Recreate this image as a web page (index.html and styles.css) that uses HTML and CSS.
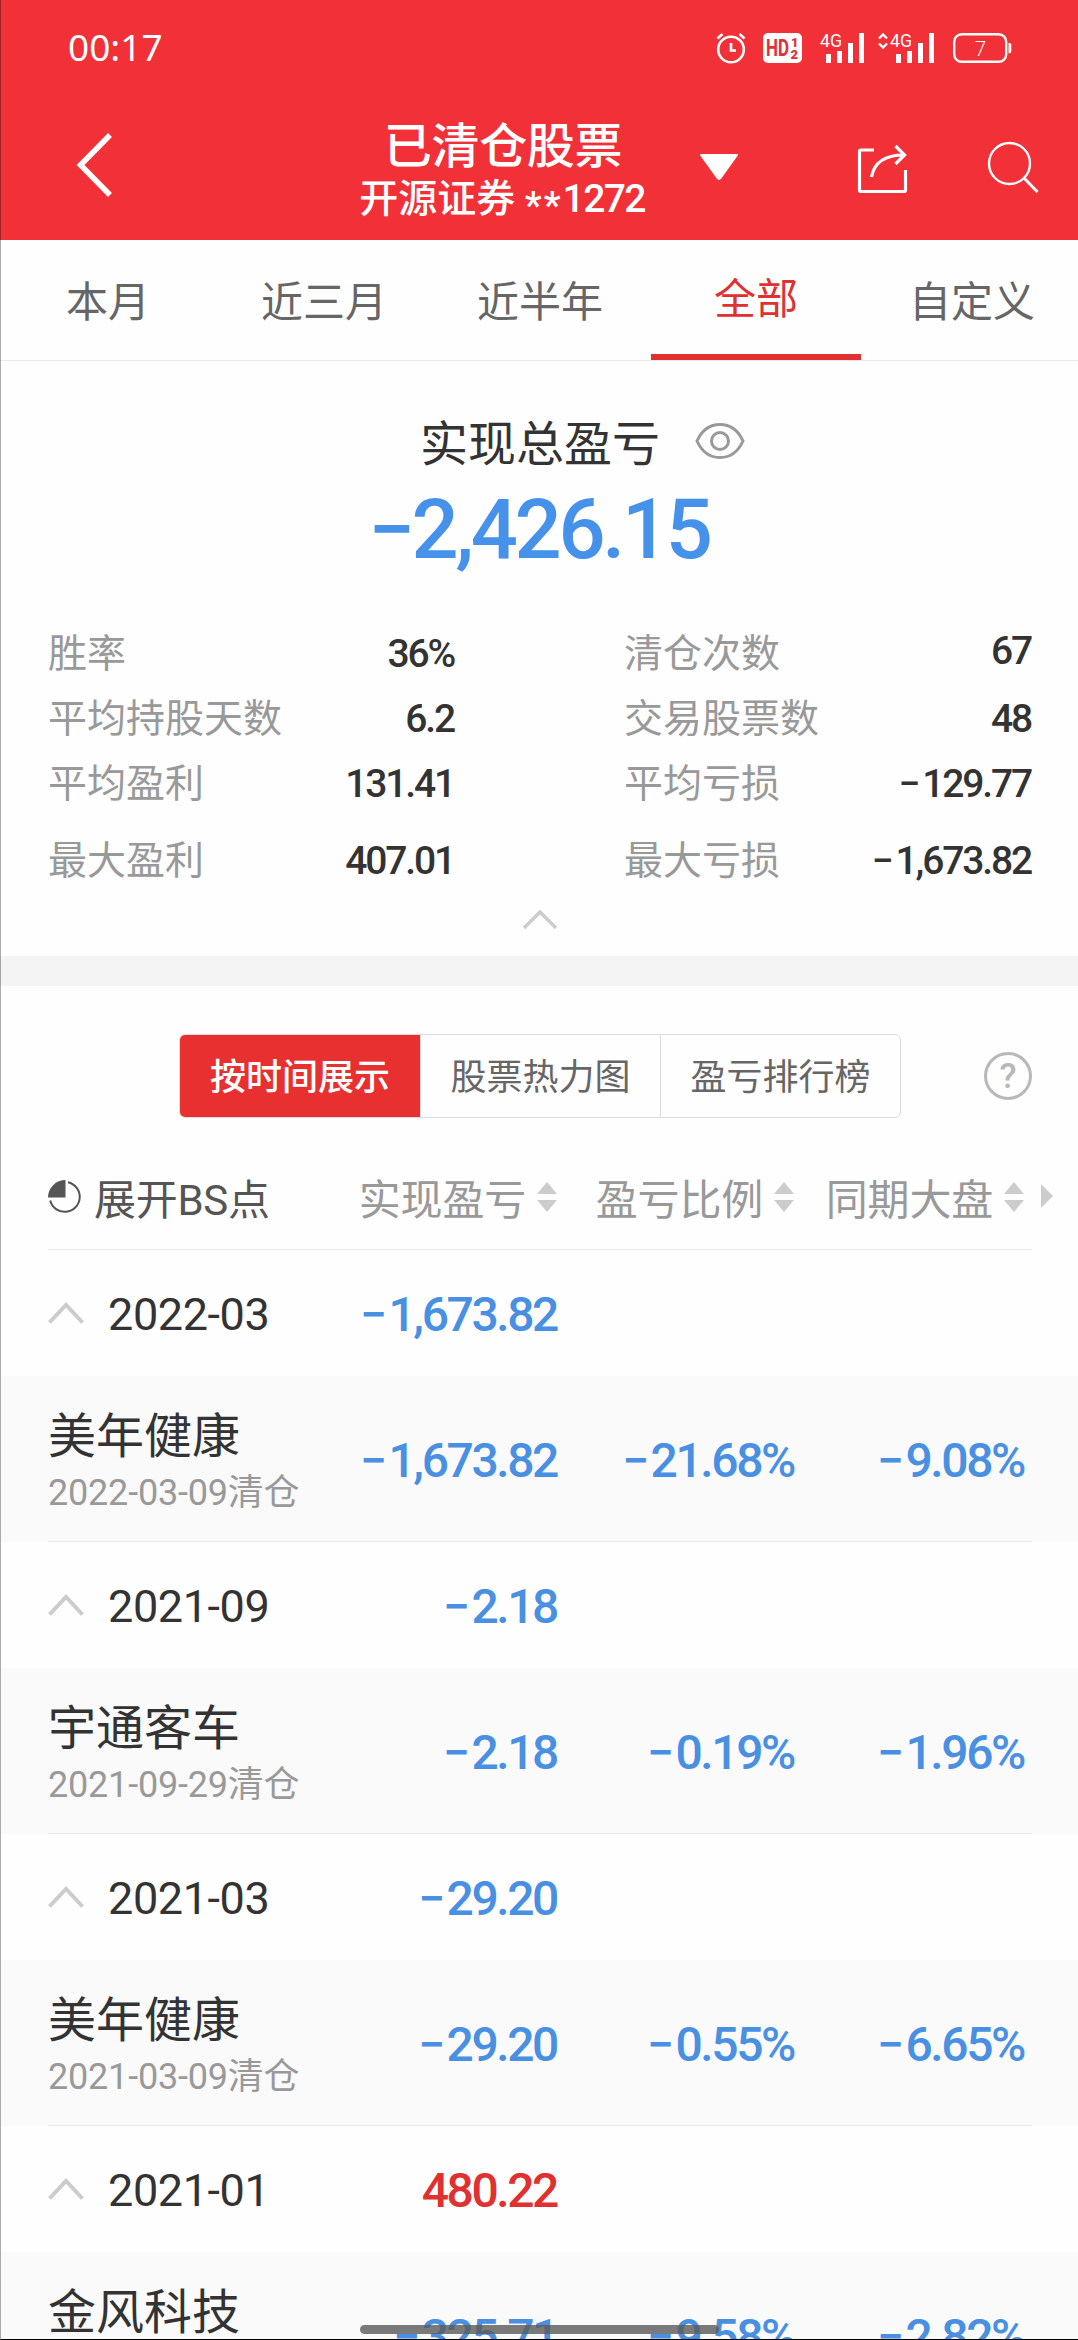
FILE: index.html
```html
<!DOCTYPE html>
<html lang="zh-CN">
<head>
    <meta charset="UTF-8">
    <meta name="viewport" content="width=device-width, initial-scale=1.0">
    <title>已清仓股票</title>
    <link rel="stylesheet" href="styles.css">
</head>
<body>
    <div class="page">
        <header class="header">
            <div class="status">
                <span class="time">00:17</span>
                <svg class="alarm" width="30" height="32" viewBox="0 0 30 32" fill="none" stroke="#fff" stroke-width="2.6">
                    <circle cx="15" cy="17.5" r="12.8"/>
                    <path d="M15 11v7.5h5M1.5 6.5l5-4.5M28.5 6.5l-5-4.5"/>
                </svg>
                <svg class="hd" width="39" height="30" viewBox="0 0 39 30">
                    <rect width="39" height="30" rx="5" fill="#fff"/>
                    <text class="hd-text" x="3" y="23" textLength="23" lengthAdjust="spacingAndGlyphs">HD</text>
                    <text class="hd-num" x="28" y="14">1</text>
                    <text class="hd-num" x="27.5" y="26">2</text>
                </svg>
                <svg class="signal" width="45" height="30" viewBox="0 0 45 30" fill="#fff">
                    <text class="net" x="0" y="14" textLength="22" lengthAdjust="spacingAndGlyphs">4G</text>
                    <path d="M6 21h5v9H6zM17 18h5v12h-5zM28 10h5v20h-5zM39 0h5v30h-5z"/>
                </svg>
                <svg class="signal2" width="57" height="30" viewBox="0 0 57 30" fill="#fff">
                    <path d="M1 5.5l4-4 4 4M1 10.5l4 4 4-4" fill="none" stroke="#fff" stroke-width="2.4"/>
                    <text class="net" x="12" y="14" textLength="22" lengthAdjust="spacingAndGlyphs">4G</text>
                    <path d="M18 21h5v9h-5zM29 18h5v12h-5zM40 10h5v20h-5zM51 0h5v30h-5z"/>
                </svg>
                <svg class="battery" width="59" height="30" viewBox="0 0 59 30">
                    <rect x="1.2" y="1.2" width="52" height="27.6" rx="7.5" fill="none" stroke="#fff" stroke-width="2.4"/>
                    <path d="M55.5 10h1.2q1.6 0 1.6 1.6v7q0 1.6-1.6 1.6h-1.2z" fill="#fff"/>
                    <text class="level" x="22" y="22.5">7</text>
                </svg>
            </div>
            <div class="nav">
                <svg class="back" width="36" height="66" viewBox="0 0 36 66" fill="none" stroke="#fff" stroke-width="5.5">
                    <path d="M34 3L4.5 33 34 63"/>
                </svg>
                <div class="heading">
                    <h1>已清仓股票</h1>
                    <p>开源证券 <span class="star">**</span><span class="acct">1272</span></p>
                </div>
                <svg class="drop" width="40" height="28" viewBox="0 0 40 28">
                    <path d="M2 2h36L21.5 25q-1.5 2-3 0z" fill="#fff" stroke="#fff" stroke-width="2" stroke-linejoin="round"/>
                </svg>
                <svg class="share" width="50" height="50" viewBox="0 0 50 50" fill="none" stroke="#fff" stroke-width="3.2">
                    <path d="M17 6H4q-1.5 0-1.5 1.5V46q0 1.5 1.5 1.5h43q1.5 0 1.5-1.5V26"/>
                    <path d="M14.5 33C17 19 28 11 47 11M38.5 2L47.5 11l-9 9"/>
                </svg>
                <svg class="search" width="52" height="52" viewBox="0 0 52 52" fill="none" stroke="#fff" stroke-width="2.4">
                    <circle cx="22.5" cy="22.5" r="20.5"/>
                    <path d="M37 37l13.5 14" stroke-width="3"/>
                </svg>
            </div>
        </header>

        <nav class="tabs">
            <a class="tab">本月</a>
            <a class="tab">近三月</a>
            <a class="tab">近半年</a>
            <a class="tab active">全部</a>
            <a class="tab">自定义</a>
        </nav>

        <section class="summary">
            <div class="summary-title">
                <span>实现总盈亏</span>
                <svg width="50" height="36" viewBox="0 0 50 36" fill="none" stroke="#999" stroke-width="3">
                    <path d="M2 18C7 7 15 1.5 25 1.5S43 7 48 18C43 29 35 34.5 25 34.5S7 29 2 18z"/>
                    <circle cx="25" cy="18" r="8.5"/>
                </svg>
            </div>
            <div class="total">−2,426.15</div>
            <div class="stats">
                <div class="stat"><span>胜率</span><b>36%</b></div>
                <div class="stat"><span>清仓次数</span><b class="raised">67</b></div>
                <div class="stat"><span>平均持股天数</span><b>6.2</b></div>
                <div class="stat"><span>交易股票数</span><b>48</b></div>
                <div class="stat"><span>平均盈利</span><b>131.41</b></div>
                <div class="stat"><span>平均亏损</span><b><i>−</i>129.77</b></div>
                <div class="stat last"><span>最大盈利</span><b>407.01</b></div>
                <div class="stat last"><span>最大亏损</span><b><i>−</i>1,673.82</b></div>
            </div>
            <svg class="collapse" width="36" height="20" viewBox="0 0 36 20" fill="none" stroke="#ccc" stroke-width="3.4">
                <path d="M2 18L18 2l16 16"/>
            </svg>
        </section>

        <section class="detail">
            <div class="switch-row">
                <div class="switch">
                    <span class="seg on">按时间展示</span>
                    <span class="seg">股票热力图</span>
                    <span class="seg">盈亏排行榜</span>
                </div>
                <span class="help">?</span>
            </div>

            <div class="row thead">
                <div class="expand">
                    <svg width="34" height="34" viewBox="0 0 34 34">
                        <path d="M17.5 0v17.5H0A17.5 17.5 0 0 1 17.5 0z" fill="#555"/>
                        <path d="M20 2.2A15 15 0 1 1 2.2 20.5" fill="none" stroke="#555" stroke-width="2"/>
                    </svg>
                    <span>展开BS点</span>
                </div>
                <div class="th">实现盈亏<i class="sort"></i></div>
                <div class="th">盈亏比例<i class="sort"></i></div>
                <div class="th">同期大盘<i class="sort"></i></div>
                <i class="more"></i>
            </div>

            <div class="row group">
                <div class="month"><svg width="36" height="22" viewBox="0 0 36 22"><path d="M1.5 20.5L18 3l16.5 17.5"/></svg>2022-03</div>
                <div class="num"><i>−</i>1,673.82</div>
            </div>
            <div class="row stock">
                <div class="name">美年健康<small>2022-03-09清仓</small></div>
                <div class="num"><i>−</i>1,673.82</div>
                <div class="num"><i>−</i>21.68%</div>
                <div class="num"><i>−</i>9.08%</div>
            </div>

            <div class="row group">
                <div class="month"><svg width="36" height="22" viewBox="0 0 36 22"><path d="M1.5 20.5L18 3l16.5 17.5"/></svg>2021-09</div>
                <div class="num"><i>−</i>2.18</div>
            </div>
            <div class="row stock">
                <div class="name">宇通客车<small>2021-09-29清仓</small></div>
                <div class="num"><i>−</i>2.18</div>
                <div class="num"><i>−</i>0.19%</div>
                <div class="num"><i>−</i>1.96%</div>
            </div>

            <div class="row group">
                <div class="month"><svg width="36" height="22" viewBox="0 0 36 22"><path d="M1.5 20.5L18 3l16.5 17.5"/></svg>2021-03</div>
                <div class="num"><i>−</i>29.20</div>
            </div>
            <div class="row stock">
                <div class="name">美年健康<small>2021-03-09清仓</small></div>
                <div class="num"><i>−</i>29.20</div>
                <div class="num"><i>−</i>0.55%</div>
                <div class="num"><i>−</i>6.65%</div>
            </div>

            <div class="row group">
                <div class="month"><svg width="36" height="22" viewBox="0 0 36 22"><path d="M1.5 20.5L18 3l16.5 17.5"/></svg>2021-01</div>
                <div class="num up">480.22</div>
            </div>
            <div class="row stock">
                <div class="name">金风科技</div>
                <div class="num"><i>−</i>325.71</div>
                <div class="num"><i>−</i>9.58%</div>
                <div class="num"><i>−</i>2.82%</div>
            </div>
        </section>

        <div class="home-bar"></div>
    </div>
</body>
</html>
```

FILE: styles.css
```css
* { box-sizing: border-box; margin: 0; padding: 0; }
body { font-family: Roboto, "Noto Sans CJK SC", sans-serif; background-color: #fff; color: #333; }
svg { display: block; flex: none; overflow: visible; }
i { font-style: normal; }

.page { position: relative; width: 1078px; height: 2340px; overflow: hidden; background-color: #fefefe; }
/* thin screen edges */
.page::after { content: ""; position: absolute; inset: 0; border-left: 1px solid rgba(0, 0, 0, 0.32); border-bottom: 1px solid #000; }

.header { height: 240px; background-color: #f13037; color: #fff; }
.status { display: flex; align-items: center; height: 96px; padding-left: 68px; }
.time { flex: 1; font-family: "Noto Sans", sans-serif; font-size: 37px; line-height: 50px; padding-bottom: 2px; }
.alarm { margin-right: 17px; }
.hd { margin-right: 18px; }
.signal { margin-right: 13px; }
.signal2 { margin-right: 18px; }
.battery { margin-right: 66px; }
.hd-text { font-size: 23px; font-weight: 700; fill: #e0303a; }
.hd-num { font-size: 13px; font-weight: 900; fill: #e0303a; }
.net { font-size: 19px; }
.level { font-size: 20px; font-weight: 300; fill: #fff; }

.nav { display: flex; align-items: flex-start; height: 144px; padding-left: 76px; }
.back { margin-top: 36px; }
.heading { width: 300px; margin: 19px 0 0 241px; text-align: center; white-space: nowrap; }
.heading h1 { font-size: 48px; font-weight: 500; line-height: 64px; letter-spacing: -0.3px; }
.heading p { font-size: 39px; font-weight: 500; line-height: 41px; margin-left: -2px; }
.star { font-size: 38px; line-height: 1; letter-spacing: 2px; vertical-align: -7px; }
.acct { letter-spacing: -1.6px; }
.drop { margin: 57px 0 0 46px; }
.share { margin: 48px 0 0 118px; }
.search { margin: 45px 0 0 80px; }

.tabs { display: grid; grid-template-columns: repeat(5, 216px); height: 121px; border-bottom: 1px solid #eaeaea; }
.tab { margin: 0 3px; height: 120px; font-size: 42px; line-height: 125px; text-align: center; color: #666; }
.active { color: #e03030; border-bottom: 6px solid #e03030; line-height: 120px; }

.summary { height: 595px; padding-top: 54px; }
.summary-title { display: flex; align-items: center; gap: 35px; padding-left: 420px; font-size: 48px; line-height: 60px; }
.summary-title svg { margin-bottom: 8px; }
.total { margin-top: 5px; font-size: 83px; font-weight: 500; line-height: 100px; letter-spacing: -0.04em; text-align: center; color: #4691ea; }
.stats { display: grid; grid-template-columns: 406px 407px; column-gap: 170px; margin: 41px 0 0 48px; }
.stat { display: flex; justify-content: space-between; font-size: 39px; line-height: 66px; height: 65px; color: #999; }
.stat b { font-weight: 500; letter-spacing: -0.055em; color: #333; }
.stat i { margin-right: 4px; }
.stat .raised { margin-top: -3px; }
.last { margin-top: 12px; }
.collapse { margin: 17px 0 0 522px; }

.detail { border-top: 30px solid #f4f4f4; }
.switch-row { display: flex; align-items: center; height: 180px; padding: 0 46px 0 179px; }
.switch { display: grid; grid-template-columns: repeat(3, 1fr); width: 722px; height: 84px; border: 1px solid #dcdcdc; border-radius: 6px; overflow: hidden; }
.seg { font-size: 36px; line-height: 86px; text-align: center; color: #666; border-left: 1px solid #dcdcdc; }
.on { margin: -1px; border: 0; background-color: #e83030; color: #fff; font-weight: 500; line-height: 88px; }
.help { width: 48px; height: 48px; margin-left: auto; border: 3px solid #b8b8b8; border-radius: 50%; font-size: 35px; font-weight: 500; line-height: 43px; text-align: center; color: #b8b8b8; }

.row { position: relative; display: grid; grid-template-columns: 260px 249px 237px 230px; align-items: center; padding-left: 48px; }
.thead { height: 84px; padding-bottom: 26px; }
.thead::after, .stock::after { content: ""; position: absolute; left: 48px; right: 46px; bottom: 0; height: 1px; background-color: #eaeaea; }
.expand { display: flex; align-items: center; gap: 12px; font-size: 42px; letter-spacing: -0.3px; color: #555; white-space: nowrap; }
.th { display: flex; align-items: center; justify-content: flex-end; gap: 11px; font-size: 42px; letter-spacing: -0.2px; color: #999; white-space: nowrap; }
.sort { display: flex; flex-direction: column; gap: 6px; }
.sort::before, .sort::after { content: ""; border-left: 10px solid transparent; border-right: 10px solid transparent; }
.sort::before { border-bottom: 12px solid #ccc; }
.sort::after { border-top: 12px solid #ccc; }
.more { position: absolute; left: 1041px; top: 18px; border-left: 12px solid #ccc; border-top: 12px solid transparent; border-bottom: 12px solid transparent; }

.group { height: 126px; padding-top: 3px; }
.month { display: flex; align-items: center; gap: 24px; font-size: 45px; letter-spacing: -0.4px; }
.month svg { margin-bottom: 3px; }
.month path { fill: none; stroke: #ccc; stroke-width: 4; }
.num { font-size: 48px; font-weight: 500; letter-spacing: -0.05em; text-align: right; color: #4a90e2; }
.num i { margin-right: 4px; }
.up { color: #e03030; }
.stock { height: 166px; background-color: #fafafa; align-items: start; }
.name { padding-top: 33px; font-size: 48px; line-height: 56px; white-space: nowrap; }
.name small { display: block; margin-top: 5px; font-size: 36px; line-height: 46px; letter-spacing: -0.2px; color: #999; }
.stock .num { padding-top: 55px; line-height: 60px; }

.home-bar { position: absolute; left: 360px; top: 2325px; width: 359px; height: 9px; border-radius: 5px; background-color: rgba(90, 90, 90, 0.8); }
```
